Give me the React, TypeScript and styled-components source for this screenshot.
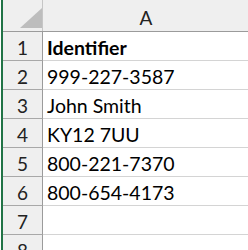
import React from 'react'
import styled, { createGlobalStyle } from 'styled-components';

const GlobalStyle = createGlobalStyle`
  html, body {
    margin: 0;
    padding: 0;
    background: #ffffff;
    overflow: hidden;
  }
`;

const Sheet = styled.div`
  width: 248px;
  height: 250px;
  overflow: hidden;
  background: #ffffff;
  border-left: 2px solid #217346;
  margin-left: 1px;
  font-family: Lato, "Open Sans", sans-serif;
  color: #000000;
`;

const Row = styled.div<{ $header?: boolean }>`
  display: grid;
  grid-template-columns: 40px 206px;
  height: ${p => (p.$header ? '31px' : '28px')};
  border-bottom: 1px solid ${p => (p.$header ? '#9b9b9b' : '#d4d4d4')};
  background: ${p => (p.$header ? '#efefef' : '#ffffff')};
`;

const RowHead = styled.div`
  display: flex;
  align-items: center;
  justify-content: center;
  background: #efefef;
  border-right: 1px solid #9b9b9b;
  font-size: 19px;
  color: #222222;
  padding-top: 2px;
  margin-bottom: -1px;
  border-bottom: 1px solid #a8a8a8;
`;

const Corner = styled.div`
  position: relative;
  background: #efefef;
  border-right: 1px solid #c6c6c6;
`;

const ColHead = styled.div`
  display: flex;
  align-items: center;
  justify-content: center;
  font-size: 19px;
  color: #222222;
  padding-top: 4px;
`;

const Cell = styled.div<{ $bold?: boolean }>`
  display: flex;
  align-items: center;
  padding-left: 4px;
  padding-top: 2px;
  font-size: 19.5px;
  font-weight: ${p => (p.$bold ? 700 : 400)};
  white-space: nowrap;
`;

const Triangle = styled.svg`
  position: absolute;
  left: 17px;
  top: 8px;
`;

const rows = [
  { value: 'Identifier', bold: true },
  { value: '999-227-3587' },
  { value: 'John Smith' },
  { value: 'KY12 7UU' },
  { value: '800-221-7370' },
  { value: '800-654-4173' },
  { value: '' },
  { value: '' },
];

function App() {
  return (
    <>
      <GlobalStyle />
      <Sheet>
        <Row $header>
          <Corner>
            <Triangle width="22" height="20" viewBox="0 0 22 20">
              <polygon points="0,20 22,20 22,0" fill="#bdbdbd" />
            </Triangle>
          </Corner>
          <ColHead>A</ColHead>
        </Row>
        {rows.map((row, i) => (
          <Row key={i}>
            <RowHead>{i + 1}</RowHead>
            <Cell $bold={row.bold}>{row.value}</Cell>
          </Row>
        ))}
      </Sheet>
    </>
  )
}

export default App
